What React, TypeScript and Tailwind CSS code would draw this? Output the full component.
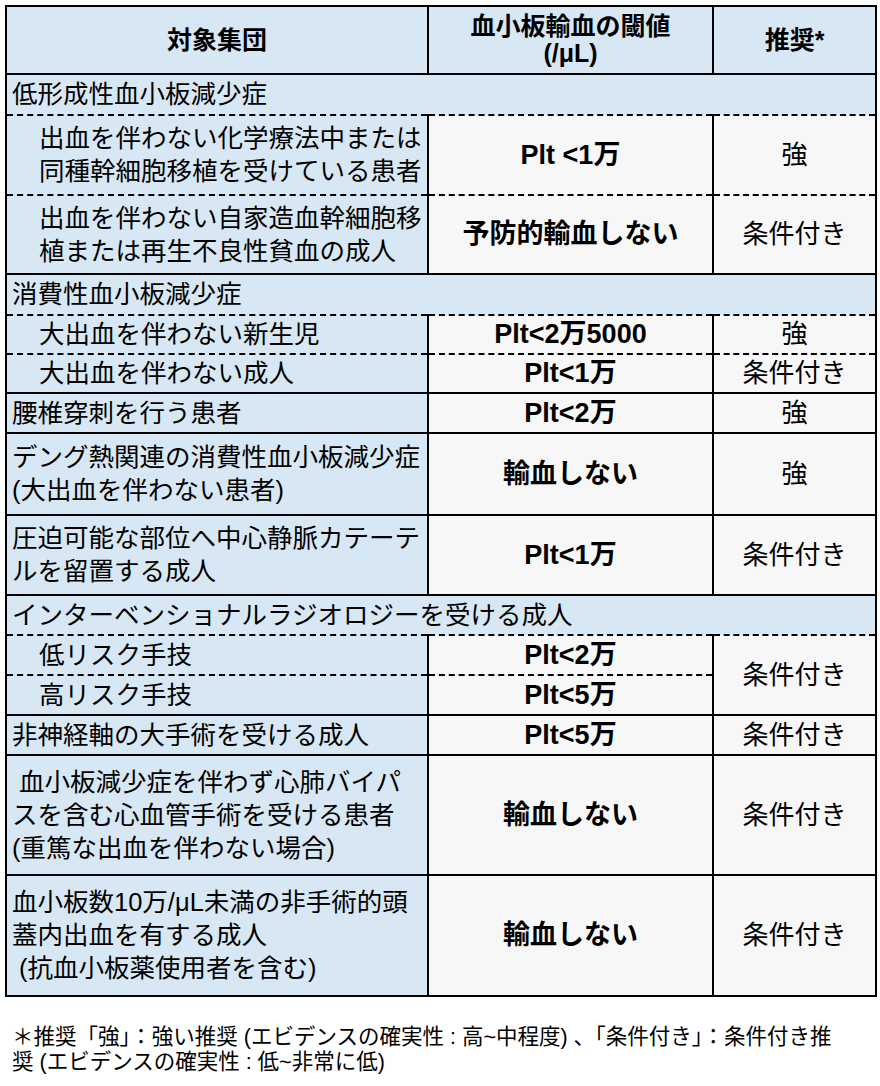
const font = { fontFamily: '"Liberation Sans", "Noto Sans CJK JP", sans-serif' };

type Row =
  | { kind: "group"; label: string; h: string; bottom: "solid" | "dashed" }
  | {
      kind: "item";
      label: string[];
      value: string;
      rec?: string;
      recSpan?: number;
      h: string;
      indent?: boolean;
      bottom: "solid" | "dashed";
    };

const rows: Row[] = [
  { kind: "group", label: "低形成性血小板減少症", h: "h-[41px]", bottom: "dashed" },
  {
    kind: "item",
    label: ["出血を伴わない化学療法中または", "同種幹細胞移植を受けている患者"],
    value: "Plt <1万",
    rec: "強",
    h: "h-[80px]",
    indent: true,
    bottom: "dashed",
  },
  {
    kind: "item",
    label: ["出血を伴わない自家造血幹細胞移", "植または再生不良性貧血の成人"],
    value: "予防的輸血しない",
    rec: "条件付き",
    h: "h-[79px]",
    indent: true,
    bottom: "solid",
  },
  { kind: "group", label: "消費性血小板減少症", h: "h-[41px]", bottom: "dashed" },
  {
    kind: "item",
    label: ["大出血を伴わない新生児"],
    value: "Plt<2万5000",
    rec: "強",
    h: "h-[39px]",
    indent: true,
    bottom: "dashed",
  },
  {
    kind: "item",
    label: ["大出血を伴わない成人"],
    value: "Plt<1万",
    rec: "条件付き",
    h: "h-[39px]",
    indent: true,
    bottom: "solid",
  },
  {
    kind: "item",
    label: ["腰椎穿刺を行う患者"],
    value: "Plt<2万",
    rec: "強",
    h: "h-[40px]",
    bottom: "solid",
  },
  {
    kind: "item",
    label: ["デング熱関連の消費性血小板減少症", "(大出血を伴わない患者)"],
    value: "輸血しない",
    rec: "強",
    h: "h-[82px]",
    bottom: "solid",
  },
  {
    kind: "item",
    label: ["圧迫可能な部位へ中心静脈カテーテ", "ルを留置する成人"],
    value: "Plt<1万",
    rec: "条件付き",
    h: "h-[80px]",
    bottom: "solid",
  },
  {
    kind: "group",
    label: "インターベンショナルラジオロジーを受ける成人",
    h: "h-[40px]",
    bottom: "dashed",
  },
  {
    kind: "item",
    label: ["低リスク手技"],
    value: "Plt<2万",
    rec: "条件付き",
    recSpan: 2,
    h: "h-[40px]",
    indent: true,
    bottom: "dashed",
  },
  {
    kind: "item",
    label: ["高リスク手技"],
    value: "Plt<5万",
    h: "h-[40px]",
    indent: true,
    bottom: "solid",
  },
  {
    kind: "item",
    label: ["非神経軸の大手術を受ける成人"],
    value: "Plt<5万",
    rec: "条件付き",
    h: "h-[40px]",
    bottom: "solid",
  },
  {
    kind: "item",
    label: [" 血小板減少症を伴わず心肺バイパ", "スを含む心血管手術を受ける患者", "(重篤な出血を伴わない場合)"],
    value: "輸血しない",
    rec: "条件付き",
    h: "h-[120px]",
    bottom: "solid",
  },
  {
    kind: "item",
    label: ["血小板数10万/μL未満の非手術的頭", "蓋内出血を有する成人", " (抗血小板薬使用者を含む)"],
    value: "輸血しない",
    rec: "条件付き",
    h: "h-[121px]",
    bottom: "solid",
  },
];

function bottomCls(b: "solid" | "dashed") {
  return b === "solid"
    ? "border-b-2 border-b-black border-solid"
    : "border-b-2 border-b-black border-solid [border-bottom-style:dashed]";
}

export default function App() {
  return (
    <div className="bg-white w-[880px] min-h-[1086px] text-black" style={font}>
      <div className="pt-[5px] pl-[5px]">
        <table className="table-fixed border-collapse w-[870px] border-2 border-black">
          <colgroup>
            <col className="w-[422px]" />
            <col className="w-[285px]" />
            <col className="w-[163px]" />
          </colgroup>
          <thead>
            <tr className="h-[68px] bg-[#d7e7f4]">
              <th className="border-2 border-black text-[25px] leading-[27px] font-bold text-center align-middle">対象集団</th>
              <th className="border-2 border-black text-[25px] font-bold text-center align-middle leading-[27px]">
                血小板輸血の閾値
                <br />
                (/μL)
              </th>
              <th className="border-2 border-black text-[25px] leading-[27px] font-bold text-center align-middle">推奨*</th>
            </tr>
          </thead>
          <tbody>
            {rows.map((r, i) =>
              r.kind === "group" ? (
                <tr key={i} className={`${r.h} bg-[#d7e7f4]`}>
                  <td colSpan={3} className={`${bottomCls(r.bottom)} pl-[5px] text-[25.5px] leading-[33px] align-middle whitespace-nowrap`}>
                    {r.label}
                  </td>
                </tr>
              ) : (
                <tr key={i} className={r.h}>
                  <td
                    className={`${bottomCls(r.bottom)} border-r-2 border-r-black bg-[#d7e7f4] align-middle whitespace-pre text-[25.5px] leading-[33px] ${
                      r.indent ? "pl-[32px]" : "pl-[5px]"
                    }`}
                  >
                    {r.label.map((l, j) => (
                      <div key={j}>{l}</div>
                    ))}
                  </td>
                  <td
                    className={`${bottomCls(r.bottom)} border-r-2 border-r-black bg-[#f7f7f7] text-center align-middle text-[27px] leading-[33px] font-bold`}
                  >
                    {r.value}
                  </td>
                  {r.rec !== undefined && (
                    <td
                      rowSpan={r.recSpan ?? 1}
                      className={`${r.recSpan ? bottomCls("solid") : bottomCls(r.bottom)} bg-[#f7f7f7] text-center align-middle text-[26px] leading-[33px]`}
                    >
                      {r.rec}
                    </td>
                  )}
                </tr>
              )
            )}
          </tbody>
        </table>
      </div>
      <div className="pl-[12px] pt-[28px] text-[21.5px] leading-[25px]">
        <div>＊推奨「強」：強い推奨 (エビデンスの確実性 : 高~中程度) 、「条件付き」：条件付き推</div>
        <div>奨 (エビデンスの確実性 : 低~非常に低)</div>
      </div>
    </div>
  );
}
